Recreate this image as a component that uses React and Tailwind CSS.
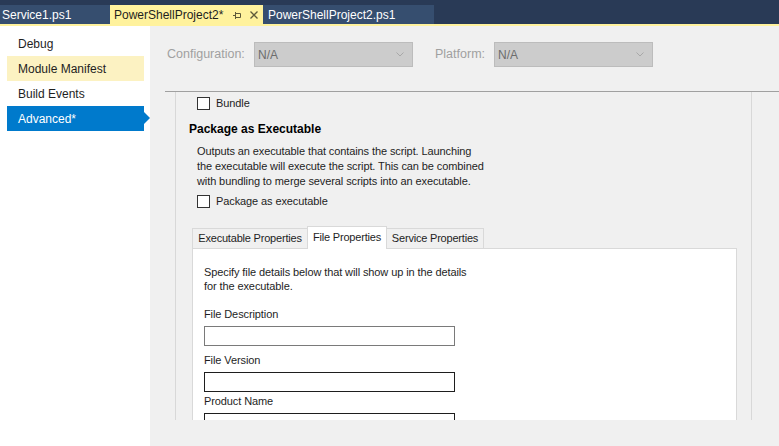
function CheckRow({ label, className }) {
  return (
    <div className={"flex items-center " + className}>
      <div className="w-[13px] h-[13px] border border-[#333333] bg-white"></div>
      <span className="ml-[6px] text-[11px] leading-[15px] tracking-[-0.1px] text-[#1e1e1e]">{label}</span>
    </div>
  )
}

function Combo() {
  return (
    <div className="w-[159px] h-[25px] bg-[#cccccc] border border-[#bcbcbc] flex items-center justify-between pl-[3px] pr-[8px]">
      <span className="text-[12px] text-[#6d6d6d]">N/A</span>
      <svg width="8" height="5" viewBox="0 0 8 5">
        <path d="M0.5 0.5 L4 4 L7.5 0.5" fill="none" stroke="#a8a8a8" strokeWidth="1" />
      </svg>
    </div>
  )
}

function Field({ label, border, top }) {
  return (
    <div className={top}>
      <div className="text-[11px] leading-[15px] tracking-[-0.1px] text-[#1e1e1e]">{label}</div>
      <div className={"mt-[4px] w-[251px] h-[20px] bg-white border " + border}></div>
    </div>
  )
}

export default function App() {
  return (
    <div className="w-[779px] h-[446px] flex flex-col overflow-hidden bg-[#f0f0f0]" style={{ fontFamily: '"Segoe UI", "Liberation Sans", Arial, sans-serif' }}>
      {/* Document tabs */}
      <div className="h-[24px] bg-[#293a56] flex items-end">
        <div className="h-[19px] w-[110px] bg-[#364e6f] flex items-center pl-[2px] text-[12px] text-white">Service1.ps1</div>
        <div className="h-[19px] w-[153px] bg-[#fff29d] flex items-center pl-[4px] text-[12px] text-[#1e1e1e]">
          <span>PowerShellProject2*</span>
          <svg className="ml-[10px]" width="8" height="8" viewBox="0 0 8 8">
            <path d="M0 4.5 H2.5 M2.5 1 V8 M2.5 2.5 H7.5 V6.5 H2.5" fill="none" stroke="#5e5a3a" strokeWidth="1" />
          </svg>
          <svg className="ml-[9px]" width="8" height="8" viewBox="0 0 8 8">
            <path d="M0.5 0.5 L7.5 7.5 M7.5 0.5 L0.5 7.5" fill="none" stroke="#5e5a3a" strokeWidth="1.3" />
          </svg>
        </div>
        <div className="h-[19px] w-[171px] bg-[#364e6f] flex items-center pl-[5px] text-[12px] text-white">PowerShellProject2.ps1</div>
      </div>
      <div className="h-[2px] bg-[#fff29d]"></div>

      <div className="flex flex-1">
        {/* Sidebar */}
        <div className="w-[150px] bg-white pt-[5px] text-[12px] text-[#1e1e1e]">
          <div className="ml-[7px] w-[137px] h-[25px] flex items-center pl-[11px]">Debug</div>
          <div className="ml-[7px] w-[137px] h-[25px] flex items-center pl-[11px] bg-[#fcf2c2]">Module Manifest</div>
          <div className="ml-[7px] w-[137px] h-[25px] flex items-center pl-[11px]">Build Events</div>
          <div className="relative ml-[7px] w-[137px] h-[25px] flex items-center pl-[11px] bg-[#007acc] text-white">
            Advanced*
            <div className="absolute right-[-6px] top-[6px] w-0 h-0 border-y-[6px] border-y-transparent border-l-[6px] border-l-[#007acc]"></div>
          </div>
        </div>

        {/* Main */}
        <div className="flex-1 flex flex-col">
          <div className="mt-[16px] flex items-center">
            <span className="ml-[17px] w-[87px] text-[12.5px] text-[#a0a0a0]">Configuration:</span>
            <Combo />
            <span className="ml-[22px] w-[59px] text-[12.5px] text-[#a0a0a0]">Platform:</span>
            <Combo />
          </div>
          <div className="mt-[24px] ml-[15px] h-[1px] bg-[#a0a0a0]"></div>
          <div className="ml-[25px] w-[577px] h-[328px] border-x border-[#d8d8d8] overflow-hidden">
            <CheckRow label="Bundle" className="mt-[4px] ml-[21px]" />
            <div className="mt-[11px] ml-[13px] text-[12px] font-bold leading-[15px] text-black">Package as Executable</div>
            <div className="mt-[7px] ml-[21px] w-[292px] text-[11px] leading-[15px] tracking-[-0.1px] text-[#1e1e1e]">
              Outputs an executable that contains the script. Launching the executable will execute the script. This can be combined with bundling to merge several scripts into an executable.
            </div>
            <CheckRow label="Package as executable" className="mt-[5px] ml-[21px]" />

            {/* Property tabs */}
            <div className="mt-[17px] ml-[16px] flex items-end">
              <div className="w-[115px] h-[20px] flex items-center justify-center bg-[#f0f0f0] border border-b-0 border-r-0 border-[#d9d9d9] text-[11px] tracking-[-0.2px] text-[#1e1e1e]">Executable Properties</div>
              <div className="relative z-10 w-[80px] h-[23px] -mb-[1px] flex items-start justify-center pt-[2px] bg-white border border-b-0 border-[#d9d9d9] text-[11px] tracking-[-0.2px] text-[#1e1e1e]">File Properties</div>
              <div className="w-[97px] h-[20px] flex items-center justify-center bg-[#f0f0f0] border border-b-0 border-l-0 border-[#d9d9d9] text-[11px] tracking-[-0.2px] text-[#1e1e1e]">Service Properties</div>
            </div>
            <div className="ml-[16px] w-[545px] h-[200px] bg-white border border-[#d9d9d9] pl-[11px] pt-[16px]">
              <div className="w-[270px] text-[11px] leading-[14px] tracking-[-0.1px] text-[#1e1e1e]">
                Specify file details below that will show up in the details for the executable.
              </div>
              <Field label="File Description" border="border-[#7a7a7a]" top="mt-[14px]" />
              <Field label="File Version" border="border-[#1e1e1e]" top="mt-[7px]" />
              <Field label="Product Name" border="border-[#1e1e1e]" top="mt-[2px]" />
            </div>
          </div>
        </div>
      </div>
    </div>
  )
}
